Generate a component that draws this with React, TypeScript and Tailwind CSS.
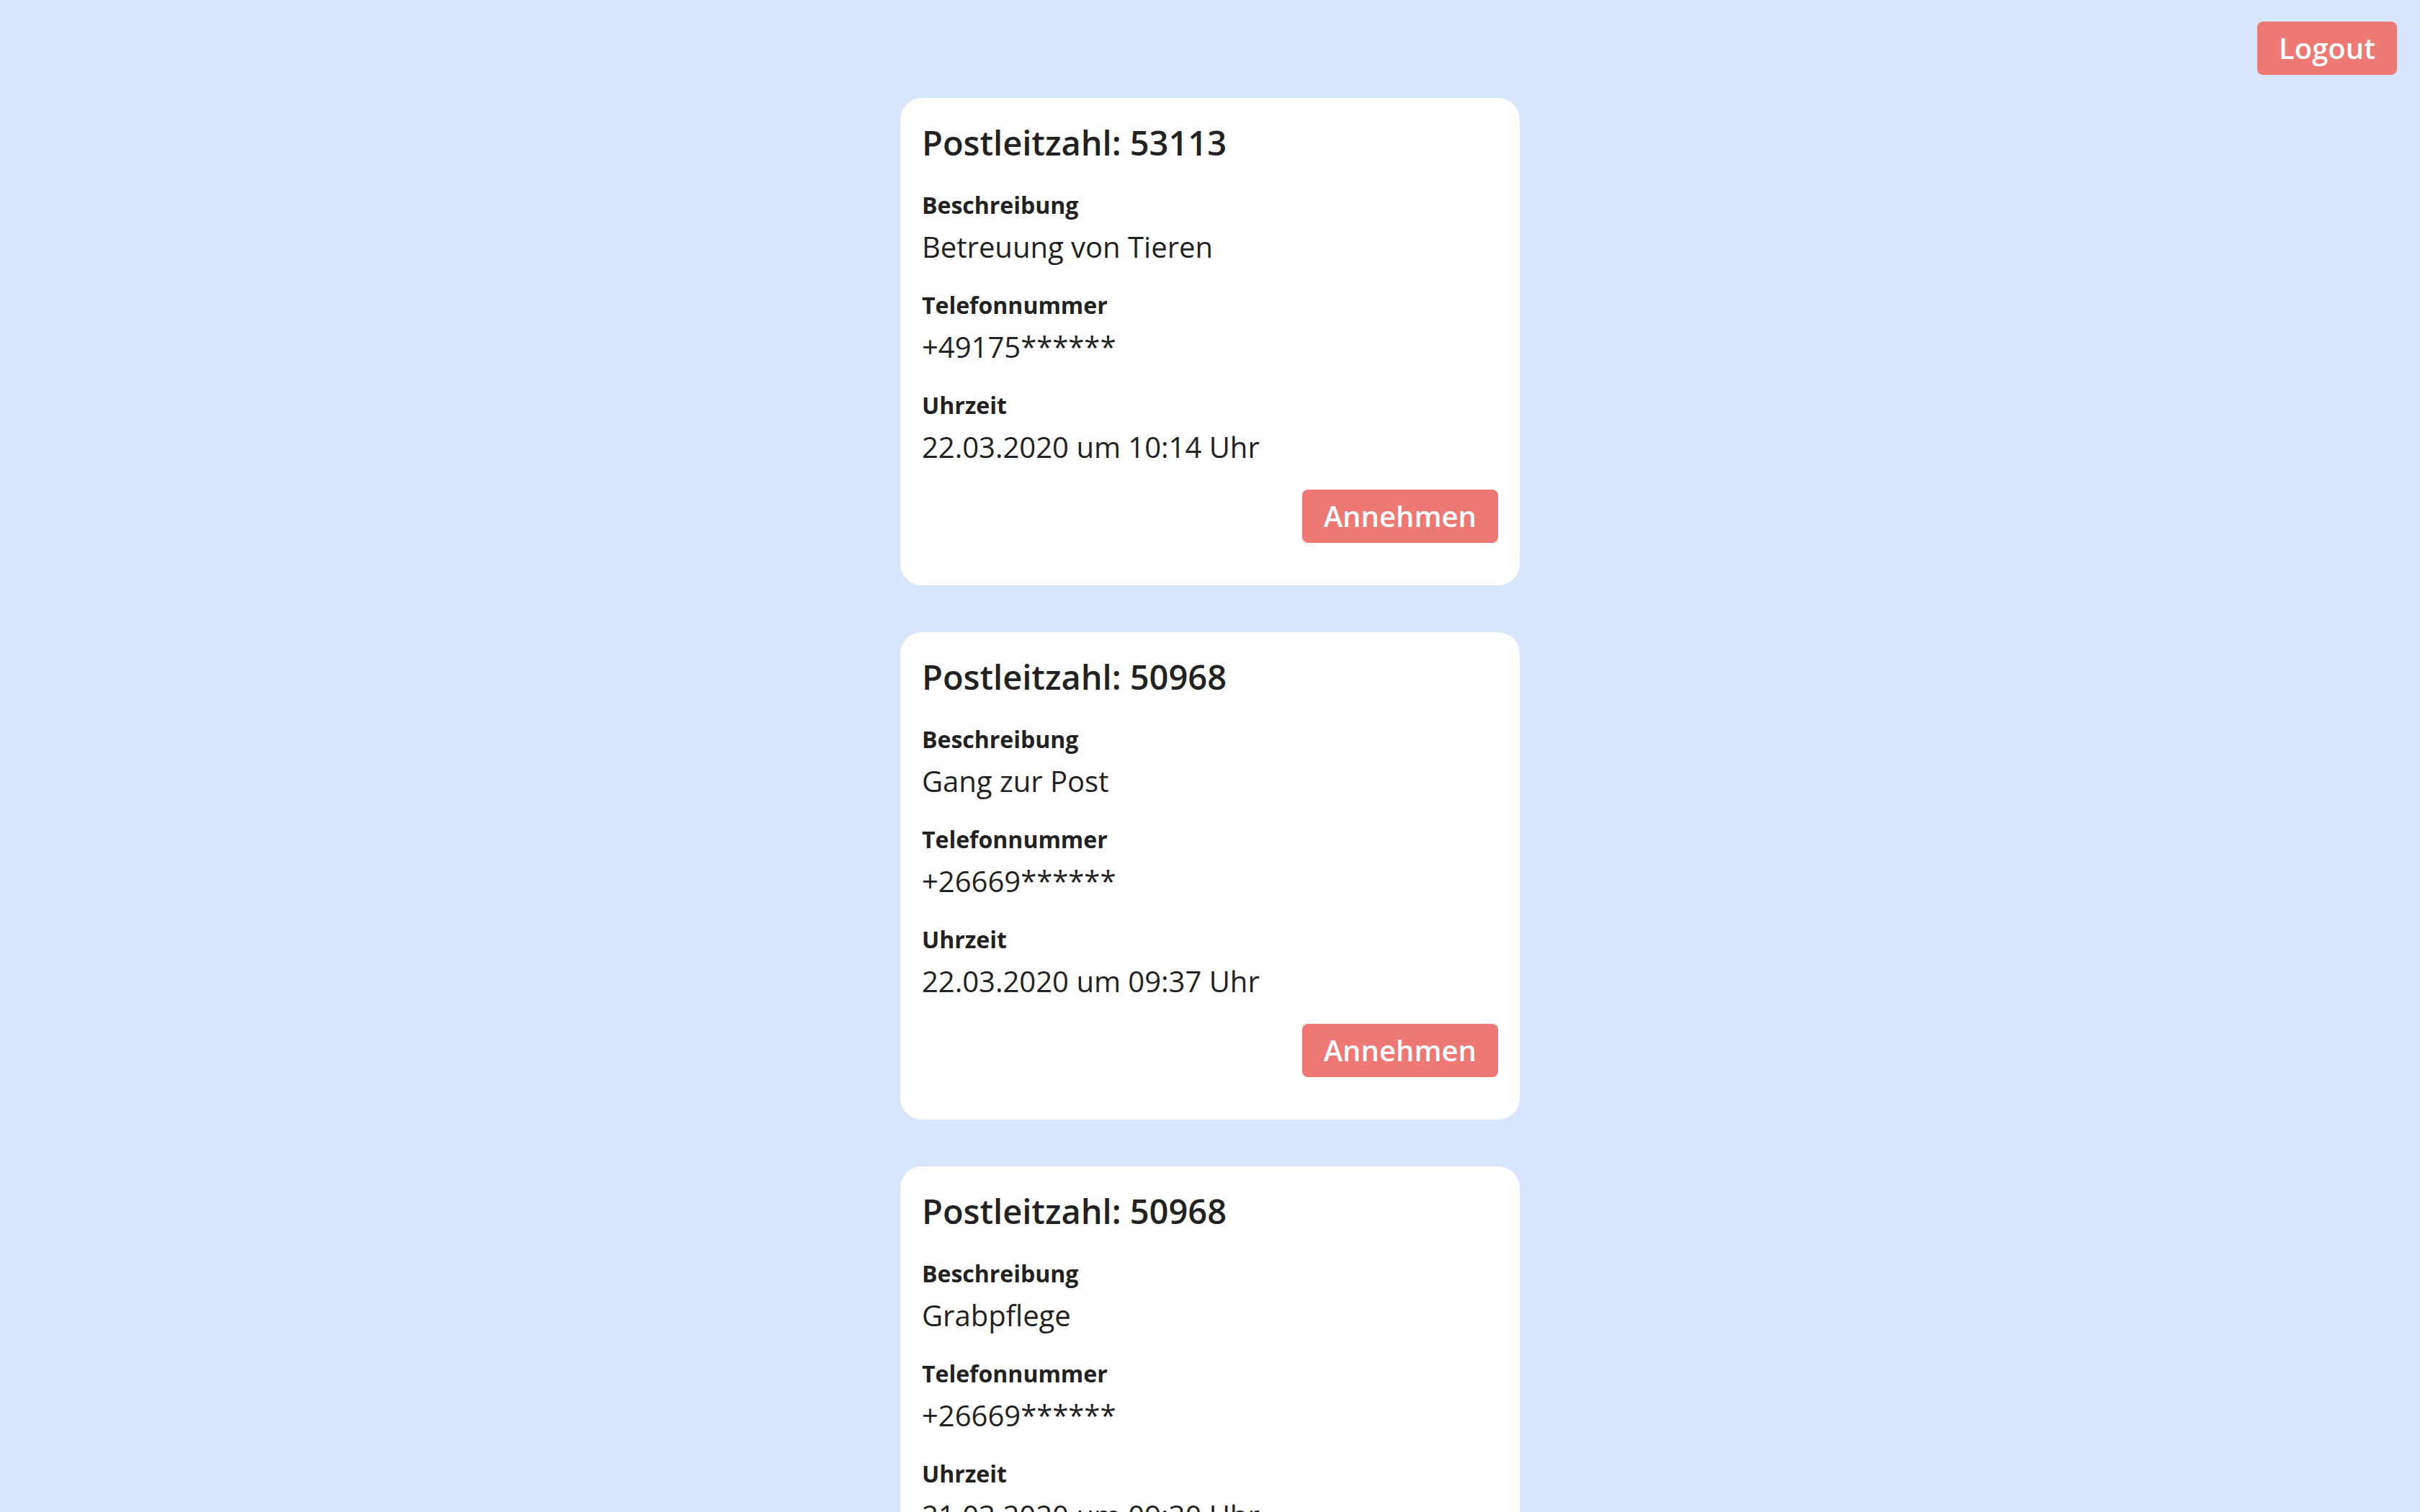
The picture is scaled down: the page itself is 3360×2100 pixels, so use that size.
import React from 'react';

interface Request {
  id: number;
  zip: string;
  description: string;
  phone: string;
  time: string;
}

const requests: Request[] = [
  { id: 1, zip: '53113', description: 'Betreuung von Tieren', phone: '+49175******', time: '22.03.2020 um 10:14 Uhr' },
  { id: 2, zip: '50968', description: 'Gang zur Post', phone: '+26669******', time: '22.03.2020 um 09:37 Uhr' },
  { id: 3, zip: '50968', description: 'Grabpflege', phone: '+26669******', time: '21.03.2020 um 09:30 Uhr' },
];

const Field: React.FC<{ label: string; value: string }> = ({ label, value }) => (
  <div className="mt-[32px]">
    <div className="text-[32px] leading-[44px] font-bold">{label}</div>
    <div className="mt-[9px] text-[40px] leading-[54px]">{value}</div>
  </div>
);

const RequestCard: React.FC<{ request: Request }> = ({ request }) => (
  <div className="w-[860px] bg-white rounded-[30px] px-[30px] pt-[30px] pb-[59px]">
    <h2 className="text-[47px] leading-[65px] font-semibold">Postleitzahl: {request.zip}</h2>
    <Field label="Beschreibung" value={request.description} />
    <Field label="Telefonnummer" value={request.phone} />
    <Field label="Uhrzeit" value={request.time} />
    <div className="mt-[32px] flex justify-end">
      <button className="bg-[#ee7873] text-white text-[40px] leading-[54px] font-semibold px-[30px] py-[10px] rounded-[8px]">
        Annehmen
      </button>
    </div>
  </div>
);

export default function App() {
  return (
    <div
      className="min-h-screen bg-[#d7e6fc] text-[#222222]"
      style={{ fontFamily: '"Open Sans", "Noto Sans", sans-serif' }}
    >
      <div className="flex justify-end pt-[30px] pr-[32px]">
        <button className="bg-[#ee7873] text-white text-[40px] leading-[54px] font-semibold px-[30px] py-[10px] rounded-[8px]">
          Logout
        </button>
      </div>
      <div className="mt-[32px] flex flex-col items-center gap-[65px] pb-[65px]">
        {requests.map(r => (
          <RequestCard key={r.id} request={r} />
        ))}
      </div>
    </div>
  );
}
